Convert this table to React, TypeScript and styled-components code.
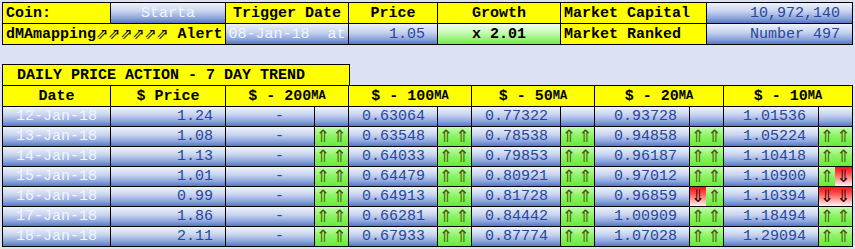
import React from "react";
import styled, { createGlobalStyle, css } from "styled-components";

const Global = createGlobalStyle`
  html, body { margin: 0; padding: 0; background: #dde2f2; }
  body { font-family: "Liberation Mono", "Courier New", monospace; }
`;

type Tone = "yellow" | "blue" | "green" | "red" | "mint";
type Ink = "black" | "light" | "dark";

const tones: Record<Tone, ReturnType<typeof css>> = {
  yellow: css`background: #ffff00;`,
  blue: css`background: linear-gradient(to bottom, #eef2fb 0%, #c9d5ef 40%, #8ea6de 75%, #5676c6 100%);`,
  green: css`background: linear-gradient(to bottom, #c6fbb4 0%, #8ef46a 45%, #66ec36 100%);`,
  mint: css`background: linear-gradient(to bottom, #f2fff0 0%, #c4fab0 45%, #6eee44 100%);`,
  red: css`background: linear-gradient(to bottom, #ff1010 0%, #ff5050 35%, #ffb8b8 75%, #fff2f2 100%);`,
};

const inks: Record<Ink, string> = {
  black: "#000000",
  light: "#f2f5ff",
  dark: "#27459a",
};

const Page = styled.div`
  padding: 2px;
  width: 851px;
`;

const TopGrid = styled.div`
  display: grid;
  grid-template-columns: 107px 114px 122px 88px 122px 145px 145px;
  grid-auto-rows: 20px;
  gap: 1px;
  background: #000;
  border: 1px solid #000;
  width: max-content;
`;

const Cell = styled.div<{
  $tone: Tone;
  $ink?: Ink;
  $align?: "left" | "center" | "right";
  $bold?: boolean;
  $span?: number;
  $padL?: number;
  $padR?: number;
}>`
  ${(p) => tones[p.$tone]}
  color: ${(p) => inks[p.$ink ?? "black"]};
  font-size: 15px;
  font-weight: ${(p) => (p.$bold ? 700 : 400)};
  display: flex;
  align-items: center;
  justify-content: ${(p) =>
    p.$align === "left" ? "flex-start" : p.$align === "right" ? "flex-end" : "center"};
  padding-left: ${(p) => p.$padL ?? 0}px;
  padding-right: ${(p) => p.$padR ?? 0}px;
  white-space: pre;
  overflow: hidden;
  grid-column: span ${(p) => p.$span ?? 1};
  line-height: 1;
`;

const Glyph = styled.span`
  font-family: "DejaVu Sans", sans-serif;
  font-weight: 400;
  font-size: 15px;
  letter-spacing: -0.5px;
`;

const Ma = styled.span`
  font-size: 12px;
`;

const Title = styled.div`
  margin-top: 19px;
  width: 332px;
  height: 20px;
  border: 1px solid #000;
  border-bottom: none;
  background: #ffff00;
  font-size: 15px;
  font-weight: 700;
  display: flex;
  align-items: center;
  padding-left: 14px;
  white-space: pre;
`;

const TrendGrid = styled.div`
  display: grid;
  grid-template-columns: 107px 114px 88px 33px 88px 33px 88px 33px 94px 33px 94px 33px;
  grid-template-rows: 20px;
  grid-auto-rows: 19px;
  gap: 1px;
  background: #000;
  border: 1px solid #000;
  width: max-content;
`;

const ArrowPair = styled.div`
  display: grid;
  grid-template-columns: 16px 17px;
`;

const ArrowHalf = styled.div<{ $dir: "u" | "d" | "n" }>`
  ${(p) => (p.$dir === "d" ? tones.red : p.$dir === "u" ? tones.green : tones.blue)}
  display: flex;
  align-items: center;
  justify-content: center;
  font-family: "DejaVu Sans", sans-serif;
  font-size: 17px;
  line-height: 1;
  color: ${(p) => (p.$dir === "d" ? "#3a0800" : "#4c5a00")};
`;

type Dir = "u" | "d" | "n";
type Row = { date: string; price: string; ma: string[]; arrows: [Dir, Dir][] };

const uu: [Dir, Dir] = ["u", "u"];
const nn: [Dir, Dir] = ["n", "n"];

const rows: Row[] = [
  { date: "12-Jan-18", price: "1.24", ma: ["0.63064", "0.77322", "0.93728", "1.01536"], arrows: [nn, nn, nn, nn, nn] },
  { date: "13-Jan-18", price: "1.08", ma: ["0.63548", "0.78538", "0.94858", "1.05224"], arrows: [uu, uu, uu, uu, uu] },
  { date: "14-Jan-18", price: "1.13", ma: ["0.64033", "0.79853", "0.96187", "1.10418"], arrows: [uu, uu, uu, uu, uu] },
  { date: "15-Jan-18", price: "1.01", ma: ["0.64479", "0.80921", "0.97012", "1.10900"], arrows: [uu, uu, uu, uu, ["u", "d"]] },
  { date: "16-Jan-18", price: "0.99", ma: ["0.64913", "0.81728", "0.96859", "1.10394"], arrows: [uu, uu, uu, ["d", "u"], ["d", "d"]] },
  { date: "17-Jan-18", price: "1.86", ma: ["0.66281", "0.84442", "1.00909", "1.18494"], arrows: [uu, uu, uu, uu, uu] },
  { date: "18-Jan-18", price: "2.11", ma: ["0.67933", "0.87774", "1.07028", "1.29094"], arrows: [uu, uu, uu, uu, uu] },
];

const arrowChar = (d: Dir) => (d === "u" ? "\u21D1" : d === "d" ? "\u21D3" : "");

const Arrows = ({ pair }: { pair: [Dir, Dir] }) => (
  <ArrowPair>
    <ArrowHalf $dir={pair[0]}>{arrowChar(pair[0])}</ArrowHalf>
    <ArrowHalf $dir={pair[1]}>{arrowChar(pair[1])}</ArrowHalf>
  </ArrowPair>
);

const MaHead = ({ n }: { n: string }) => (
  <Cell $tone="yellow" $bold $span={2}>
    {"$ - " + n}
    <Ma>MA</Ma>
  </Cell>
);

export default function App() {
  return (
    <>
      <Global />
      <Page>
        <TopGrid>
          <Cell $tone="yellow" $bold $align="left" $padL={3}>Coin:</Cell>
          <Cell $tone="blue" $ink="light">Starta</Cell>
          <Cell $tone="yellow" $bold>Trigger Date</Cell>
          <Cell $tone="yellow" $bold>Price</Cell>
          <Cell $tone="yellow" $bold>Growth</Cell>
          <Cell $tone="yellow" $bold $align="left" $padL={3}>Market Capital</Cell>
          <Cell $tone="blue" $ink="dark" $align="right" $padR={12}>10,972,140</Cell>

          <Cell $tone="yellow" $bold $align="left" $padL={3} $span={2}>
            dMAmapping<Glyph>{"\u21D7\u21D7\u21D7\u21D7\u21D7\u21D7"}</Glyph> Alert
          </Cell>
          <Cell $tone="blue" $ink="light">{"08-Jan-18  at"}</Cell>
          <Cell $tone="blue" $ink="dark" $align="right" $padR={12}>1.05</Cell>
          <Cell $tone="mint" $bold>x 2.01</Cell>
          <Cell $tone="yellow" $bold $align="left" $padL={3}>Market Ranked</Cell>
          <Cell $tone="blue" $ink="dark" $align="right" $padR={12}>Number 497</Cell>
        </TopGrid>

        <Title>DAILY PRICE ACTION - 7 DAY TREND</Title>
        <TrendGrid>
          <Cell $tone="yellow" $bold>Date</Cell>
          <Cell $tone="yellow" $bold>$ Price</Cell>
          <MaHead n="200" />
          <MaHead n="100" />
          <MaHead n="50" />
          <MaHead n="20" />
          <MaHead n="10" />

          {rows.map((r) => (
            <React.Fragment key={r.date}>
              <Cell $tone="blue" $ink="light">{r.date}</Cell>
              <Cell $tone="blue" $ink="dark" $align="right" $padR={12}>{r.price}</Cell>
              <Cell $tone="blue" $ink="dark" $align="right" $padR={30}>-</Cell>
              <Arrows pair={r.arrows[0]} />
              {r.ma.map((v, i) => (
                <React.Fragment key={i}>
                  <Cell $tone="blue" $ink="dark" $align="right" $padR={12}>{v}</Cell>
                  <Arrows pair={r.arrows[i + 1]} />
                </React.Fragment>
              ))}
            </React.Fragment>
          ))}
        </TrendGrid>
      </Page>
    </>
  );
}
